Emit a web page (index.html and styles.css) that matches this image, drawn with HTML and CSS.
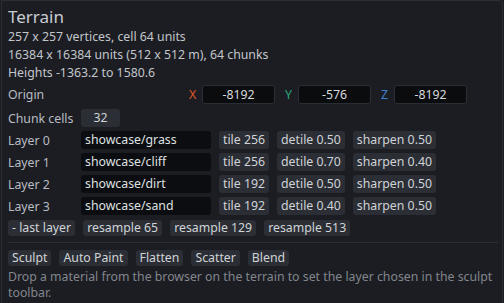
FILE: index.html
```html
<!DOCTYPE html>
<html>
<head>
<meta charset="utf-8">
<link rel="stylesheet" href="styles.css">
</head>
<body>
<div class="panel">
  <div class="title">Terrain</div>
  <div class="info">257 x 257 vertices, cell 64 units</div>
  <div class="info">16384 x 16384 units (512 x 512 m), 64 chunks</div>
  <div class="info">Heights -1363.2 to 1580.6</div>

  <div class="row origin">
    <span class="label">Origin</span>
    <div class="xyz">
      <span class="axis ax-x">X</span><span class="num">-8192</span>
      <span class="axis ax-y">Y</span><span class="num">-576</span>
      <span class="axis ax-z">Z</span><span class="num">-8192</span>
    </div>
  </div>

  <div class="row chunk">
    <span class="label">Chunk cells</span>
    <span class="drag">32</span>
  </div>

  <div class="row layer">
    <span class="label">Layer 0</span>
    <span class="path">showcase/grass</span>
    <span class="btn">tile 256</span><span class="btn">detile 0.50</span><span class="btn">sharpen 0.50</span>
  </div>
  <div class="row layer">
    <span class="label">Layer 1</span>
    <span class="path">showcase/cliff</span>
    <span class="btn">tile 256</span><span class="btn">detile 0.70</span><span class="btn">sharpen 0.40</span>
  </div>
  <div class="row layer">
    <span class="label">Layer 2</span>
    <span class="path">showcase/dirt</span>
    <span class="btn">tile 192</span><span class="btn">detile 0.50</span><span class="btn">sharpen 0.50</span>
  </div>
  <div class="row layer">
    <span class="label">Layer 3</span>
    <span class="path">showcase/sand</span>
    <span class="btn">tile 192</span><span class="btn">detile 0.40</span><span class="btn">sharpen 0.50</span>
  </div>

  <div class="row actions">
    <span class="btn small">- last layer</span><span class="btn small">resample 65</span><span class="btn small">resample 129</span><span class="btn small">resample 513</span>
  </div>

  <div class="sep"></div>

  <div class="row tools">
    <span class="btn small">Sculpt</span><span class="btn small">Auto Paint</span><span class="btn small">Flatten</span><span class="btn small">Scatter</span><span class="btn small">Blend</span>
  </div>

  <p class="note">Drop a material from the browser on the terrain to set the layer chosen in the sculpt toolbar.</p>
</div>
</body>
</html>
```
FILE: styles.css
```css
html, body {
  margin: 0;
  padding: 0;
  background: #1b1d22;
  overflow: hidden;
}
body {
  width: 504px;
  height: 303px;
  font-family: "Noto Sans", "DejaVu Sans", sans-serif;
  font-size: 12.3px;
  color: #c3c6cb;
}
.panel {
  box-sizing: border-box;
  margin-left: 1px;
  width: 502px;
  height: 303px;
  border: 1px solid #2b2e34;
  border-bottom: none;
  border-radius: 0 5px 0 0;
  padding: 5px 7px 0 6px;
  background: #1b1d22;
}
.title {
  font-size: 17px;
  line-height: 22px;
  color: #c9ccd1;
}
.info {
  line-height: 18px;
  height: 18px;
  white-space: nowrap;
}
.row {
  display: flex;
  align-items: center;
  white-space: nowrap;
}
.label {
  color: #b9bcc2;
}
.origin {
  height: 19px;
  margin-top: 3px;
}
.origin .label {
  flex: 1;
}
.xyz {
  display: flex;
  align-items: center;
  margin-right: 28px;
}
.axis {
  width: 12px;
  margin-right: 1px;
}
.ax-x { color: #e0582b; }
.ax-y { color: #2ea57c; margin-left: 10px; }
.ax-z { color: #3b82d4; margin-left: 10px; }
.num {
  box-sizing: border-box;
  width: 73px;
  height: 19px;
  line-height: 17px;
  text-align: center;
  background: #0b0c0e;
  border: 1px solid #2a2d33;
  border-radius: 3px;
  color: #d8dadd;
}
.chunk {
  height: 18px;
  margin-top: 5px;
}
.chunk .label {
  width: 73px;
}
.drag {
  width: 39px;
  height: 18px;
  line-height: 18px;
  text-align: center;
  background: #2b2e34;
  border-radius: 3px;
  color: #d2d4d8;
}
.layer {
  height: 18px;
  margin-top: 4px;
  gap: 8px;
}
.layer .label {
  width: 65px;
}
.path {
  box-sizing: border-box;
  width: 130px;
  height: 18px;
  line-height: 18px;
  padding-left: 4px;
  background: #0c0d10;
  border-radius: 3px;
  color: #dfe0e2;
}
.btn {
  height: 18px;
  line-height: 18px;
  padding: 0 4px;
  background: #2b2e34;
  border-radius: 3px;
  color: #d0d3d7;
}
.btn.small {
  height: 16px;
  line-height: 16px;
}
.actions {
  margin-top: 5px;
  gap: 8px;
}
.sep {
  height: 1px;
  background: #2b2e34;
  margin: 6px -3px 7px 0;
}
.tools {
  gap: 8px;
}
.note {
  margin: 3px 0 0 0;
  line-height: 16px;
  color: #82868d;
}
```
